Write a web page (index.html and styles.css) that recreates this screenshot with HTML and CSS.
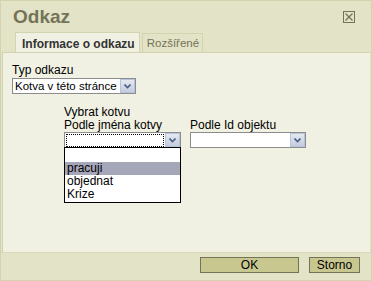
FILE: index.html
```html
<!DOCTYPE html>
<html lang="cs">
<head>
  <meta charset="UTF-8">
  <title>Odkaz</title>
  <link rel="stylesheet" href="styles.css">
</head>
<body>
  <div class="dialog">
    <div class="title-bar">
      <h1 class="title">Odkaz</h1>
      <span class="close">
        <svg width="12" height="12" viewBox="0 0 12 12">
          <rect x="0.5" y="0.5" width="11" height="11" fill="none" stroke="#73735a"/>
          <path d="M2.5 2.5 L9.5 9.5 M9.5 2.5 L2.5 9.5" stroke="#73735a" stroke-width="1.2"/>
        </svg>
      </span>
    </div>

    <div class="tabs">
      <div class="tab active">Informace o odkazu</div>
      <div class="tab">Rozšířené</div>
    </div>

    <div class="panel">
      <label class="label">Typ odkazu</label>
      <div class="select type-select">
        <span class="select-value">Kotva v této stránce</span>
        <span class="arrow"><svg width="7" height="5" viewBox="0 0 7 5"><path d="M0.5 0.5 L3.5 3.5 L6.5 0.5" fill="none" stroke="#4d6185" stroke-width="1.6"/></svg></span>
      </div>

      <div class="anchor">
        <div class="label">Vybrat kotvu</div>
        <div class="anchor-row">
          <div class="field">
            <div class="label">Podle jména kotvy</div>
            <div class="select name-select focused">
              <span class="select-value"></span>
              <span class="arrow"><svg width="7" height="5" viewBox="0 0 7 5"><path d="M0.5 0.5 L3.5 3.5 L6.5 0.5" fill="none" stroke="#4d6185" stroke-width="1.6"/></svg></span>
              <ul class="dropdown">
                <li>&nbsp;</li>
                <li class="selected">pracuji</li>
                <li>objednat</li>
                <li>Krize</li>
              </ul>
            </div>
          </div>
          <div class="field">
            <div class="label">Podle Id objektu</div>
            <div class="select id-select">
              <span class="select-value"></span>
              <span class="arrow"><svg width="7" height="5" viewBox="0 0 7 5"><path d="M0.5 0.5 L3.5 3.5 L6.5 0.5" fill="none" stroke="#4d6185" stroke-width="1.6"/></svg></span>
            </div>
          </div>
        </div>
      </div>
    </div>

    <div class="footer">
      <button class="btn ok">OK</button>
      <button class="btn storno">Storno</button>
    </div>
  </div>
</body>
</html>
```

FILE: styles.css
```css
html, body {
  margin: 0;
  height: 100%;
}
body {
  font-family: "Liberation Sans", Arial, sans-serif;
  font-size: 12px;
  color: #000;
  background: #e3e3c7;
  white-space: nowrap;
}
.dialog {
  box-sizing: border-box;
  height: 281px;
  width: 372px;
  display: flex;
  flex-direction: column;
  border: 1px solid #d3d3b0;
  background: #e3e3c7;
}
.title-bar {
  display: flex;
  justify-content: space-between;
  align-items: flex-start;
  padding: 5px 16px 0 12px;
  height: 26px;
}
.title {
  margin: 0;
  font-size: 19px;
  font-weight: bold;
  color: #737357;
  line-height: 22px;
}
.close {
  margin-top: 5px;
  display: flex;
}
.tabs {
  display: flex;
  gap: 2px;
  padding-left: 14px;
  height: 20px;
}
.tab {
  box-sizing: border-box;
  height: 20px;
  padding: 3px 3px 0 4px;
  font-size: 11.5px;
  color: #737357;
  background: #e3e3c7;
  border: 1px solid #d3d3b0;
  border-bottom: none;
  margin-top: 1px;
}
.tab.active {
  margin-top: 0;
  height: 21px;
  font-size: 12px;
  font-weight: bold;
  color: #333;
  background: #f1f1e3;
  padding: 4px 4px 0 6px;
}
.panel {
  flex: 1;
  background: #f1f1e3;
  border-top: 1px solid #d3d3b0;
  border-left: 1px solid #d3d3b0;
  margin: 0 1px;
  padding: 11px 10px 0 9px;
  position: relative;
}
.label {
  display: block;
  line-height: 13px;
  color: #000;
}
.select {
  box-sizing: border-box;
  position: relative;
  display: flex;
  align-items: center;
  height: 16px;
  background: #fff;
  border: 1px solid #8c8c8c;
}
.select-value {
  flex: 1;
  min-width: 0;
  overflow: hidden;
  padding-left: 2px;
  font-size: 11.5px;
  line-height: 14px;
}
.arrow {
  box-sizing: border-box;
  flex: none;
  width: 15px;
  height: 14px;
  display: flex;
  align-items: center;
  justify-content: center;
  background: linear-gradient(#e4e8f0, #c4cce0);
  border: 1px solid #b8c4dc;
}
.type-select {
  width: 124px;
  margin-top: 1px;
}
.anchor {
  margin: 12px 0 0 52px;
}
.anchor-row {
  display: flex;
  gap: 9px;
}
.name-select {
  width: 117px;
}
.focused .select-value {
  height: 11px;
  margin: 0 2px;
  outline: 1px dotted #000;
  padding: 0;
}
.id-select {
  width: 116px;
}
.dropdown {
  position: absolute;
  top: 14px;
  left: -1px;
  width: 117px;
  box-sizing: border-box;
  margin: 0;
  padding: 1px 0;
  list-style: none;
  background: #fff;
  border: 1px solid #000;
}
.dropdown li {
  height: 13px;
  line-height: 13px;
  padding-left: 2px;
}
.dropdown li.selected {
  background: #a6a6b9;
}
.footer {
  height: 23px;
  display: flex;
  justify-content: flex-end;
  align-items: flex-start;
  gap: 10px;
  padding: 4px 11px 0 0;
  border-top: 1px solid #d8d8bc;
}
.btn {
  box-sizing: border-box;
  height: 16px;
  padding: 0;
  font-family: inherit;
  font-size: 12px;
  line-height: 14px;
  color: #000;
  background: #c7c78f;
  border: 1px solid #737357;
}
.btn.ok {
  width: 99px;
}
.btn.storno {
  width: 51px;
}
```
